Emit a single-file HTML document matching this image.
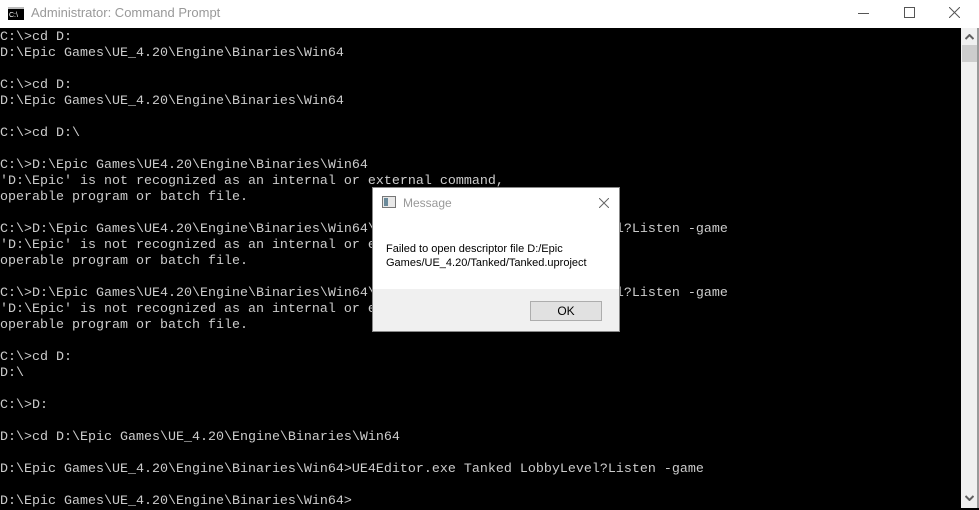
<!DOCTYPE html>
<html><head><style>
body{margin:0;width:979px;height:508px;overflow:hidden;background:#000;position:relative;font-family:"Liberation Sans",sans-serif}
#tb{position:absolute;left:0;top:0;width:979px;height:28px;background:#fff}
#tb .t{position:absolute;left:31px;top:5px;font-size:13px;color:#999}
#con{position:absolute;left:0;top:28px;width:961px;height:480px;background:#000}
pre{margin:0;padding-top:2px;font-family:"Liberation Mono",monospace;font-size:13.33px;line-height:16px;color:#ccc}
#sb{position:absolute;left:961px;top:28px;width:16px;height:480px;background:#f0f0f0}
#bd{position:absolute;left:977px;top:28px;width:2px;height:480px;background:#9a9a9a}
#dlg{position:absolute;left:372px;top:187px;width:248px;height:145px;background:#fff;border:1px solid #888;box-sizing:border-box}
#ft{position:absolute;left:0;bottom:0;width:100%;height:42px;background:#f0f0f0}
#ok{position:absolute;left:157px;top:12px;width:72px;height:20px;border:1px solid #adadad;background:#e1e1e1;box-sizing:border-box;font-size:12px;text-align:center;line-height:18px;color:#000}
</style></head><body>
<div id="tb">
<svg style="position:absolute;left:8px;top:7px" width="16" height="13"><rect x="0" y="0" width="16" height="13" fill="#000"/><rect x="0" y="0" width="16" height="2" fill="#bbb"/><text x="1" y="10" font-size="7" fill="#fff" font-family="Liberation Sans">C:\</text></svg>
<div class="t">Administrator: Command Prompt</div>
<div style="position:absolute;left:858px;top:13px;width:11px;height:1px;background:#555"></div>
<div style="position:absolute;left:904px;top:7px;width:9px;height:9px;border:1px solid #555"></div>
<svg style="position:absolute;left:949px;top:7px" width="11" height="11"><path d="M0 0L11 11M11 0L0 11" stroke="#555" stroke-width="1"/></svg>
</div>
<div id="con"><pre>C:\>cd D:
D:\Epic Games\UE_4.20\Engine\Binaries\Win64

C:\>cd D:
D:\Epic Games\UE_4.20\Engine\Binaries\Win64

C:\>cd D:\

C:\>D:\Epic Games\UE4.20\Engine\Binaries\Win64
'D:\Epic' is not recognized as an internal or external command,
operable program or batch file.

C:\>D:\Epic Games\UE4.20\Engine\Binaries\Win64\UE4Editor.exe Tanked LobbyLevel?Listen -game
'D:\Epic' is not recognized as an internal or external command,
operable program or batch file.

C:\>D:\Epic Games\UE4.20\Engine\Binaries\Win64\UE4Editor.exe Tanked LobbyLevel?Listen -game
'D:\Epic' is not recognized as an internal or external command,
operable program or batch file.

C:\>cd D:
D:\

C:\>D:

D:\>cd D:\Epic Games\UE_4.20\Engine\Binaries\Win64

D:\Epic Games\UE_4.20\Engine\Binaries\Win64>UE4Editor.exe Tanked LobbyLevel?Listen -game

D:\Epic Games\UE_4.20\Engine\Binaries\Win64></pre></div>
<div id="sb">
<svg style="position:absolute;left:4px;top:6px" width="9" height="6"><path d="M0.5 5L4.5 1L8.5 5" stroke="#606060" stroke-width="2" fill="none"/></svg>
<div style="position:absolute;left:1px;top:17px;width:15px;height:17px;background:#cdcdcd"></div>
<svg style="position:absolute;left:4px;top:467px" width="9" height="6"><path d="M0.5 1L4.5 5L8.5 1" stroke="#606060" stroke-width="2" fill="none"/></svg>
</div>
<div id="bd"></div>
<div id="dlg">
<svg style="position:absolute;left:9px;top:8px" width="14" height="12"><rect x="0.5" y="0.5" width="13" height="11" fill="#e8e8e8" stroke="#777"/><rect x="2" y="2" width="4" height="8" fill="#6a8a9a"/></svg>
<div style="position:absolute;left:30px;top:8px;font-size:12px;color:#999">Message</div>
<svg style="position:absolute;left:226px;top:10px" width="10" height="10"><path d="M0 0L10 10M10 0L0 10" stroke="#666"/></svg>
<div style="position:absolute;left:13px;top:54px;font-size:11px;line-height:14px;color:#000">Failed to open descriptor file D:/Epic<br>Games/UE_4.20/Tanked/Tanked.uproject</div>
<div id="ft"><div id="ok">OK</div></div>
</div>
</body></html>
